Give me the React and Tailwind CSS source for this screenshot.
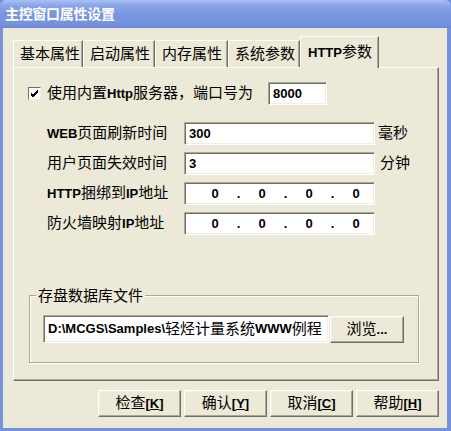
import React from 'react';

const font = "font-['Liberation_Sans','Noto_Sans_CJK_SC',sans-serif]";

const sunken =
  'border border-t-[#aca899] border-l-[#aca899] border-b-white border-r-white shadow-[inset_1px_1px_0_#716f64,inset_-1px_-1px_0_#f1efe2] bg-white';

const raised =
  'border border-t-white border-l-white border-b-[#716f64] border-r-[#716f64] shadow-[inset_-1px_-1px_0_#aca899,inset_1px_1px_0_#f1efe2] bg-[#ece9d8]';

const L = ({ children }) => <b className="font-bold text-[13px]">{children}</b>;

const tabs = [
  { label: '基本属性', w: 'w-[70px]' },
  { label: '启动属性', w: 'w-[72px]' },
  { label: '内存属性', w: 'w-[73px]' },
  { label: '系统参数', w: 'w-[72px]' },
];

const IpField = () => (
  <div className={`${sunken} h-[23px] w-[191px] flex items-center`}>
    <div className="w-[26px]" />
    {[0, 1, 2, 3].map((i) => (
      <React.Fragment key={i}>
        <span className="w-[8px] text-center text-[13px] font-bold">0</span>
        {i < 3 && <span className="w-[39px] text-center text-[13px] font-bold">.</span>}
      </React.Fragment>
    ))}
  </div>
);

const Btn = ({ text, k }) => (
  <button type="button" className={`${raised} w-[83px] h-[27px] flex items-center justify-center text-[15px]`}>
    {text}
    <b className="font-bold text-[13px]">
      [<span className="underline">{k}</span>]
    </b>
  </button>
);

export default function App() {
  return (
    <div className={`${font} w-[451px] h-[431px] flex flex-col bg-[#7391dc] text-black overflow-hidden`}>
      {/* title bar */}
      <div className="h-[28px] shrink-0 flex items-center pl-[5px] rounded-t-[6px] bg-[linear-gradient(to_bottom,#a9c0f2_0%,#8aa5e8_20%,#7b97e0_45%,#7592dd_85%,#6a88d6_100%)]">
        <span className="text-white font-bold text-[14px] tracking-[-0.3px]">主控窗口属性设置</span>
      </div>

      {/* body */}
      <div className="flex-1 ml-[3px] mr-[4px] mb-[3px] bg-[#ece9d8] pl-[10px] pr-[8px] pt-[8px] flex flex-col">
        {/* tab strip */}
        <div className="h-[31px] flex items-end">
          {tabs.map((t) => (
            <div
              key={t.label}
              className={`${t.w} h-[27px] flex items-center pl-[6px] text-[15px] border-l border-t border-l-white border-t-white border-r border-r-[#716f64] shadow-[inset_-1px_0_0_#aca899] bg-[#ece9d8]`}
            >
              {t.label}
            </div>
          ))}
          <div className="w-[79px] h-[32px] -mb-[1px] relative z-10 flex items-center pl-[7px] text-[15px] border-l border-t border-l-white border-t-white border-r border-r-[#716f64] shadow-[inset_-1px_0_0_#aca899] bg-[#ece9d8]">
            <L>HTTP</L>参数
          </div>
        </div>

        {/* panel */}
        <div className="h-[314px] border border-t-white border-l-white border-b-[#716f64] border-r-[#716f64] shadow-[inset_-1px_-1px_0_#aca899] flex flex-col pl-[14px] pt-[14px]">
          <div className="flex items-center h-[23px]">
            <div className="w-[240px] flex items-center">
              <div className="w-[13px] h-[13px] bg-white border border-t-[#716f64] border-l-[#716f64] border-b-[#f1efe2] border-r-[#f1efe2] flex items-center justify-center">
                <svg width="9" height="9" viewBox="0 0 9 9">
                  <path d="M1 4 L3 6 L8 1 M1 5 L3 7 L8 2 M1 6 L3 8 L8 3" stroke="#000" strokeWidth="1" fill="none" />
                </svg>
              </div>
              <span className="ml-[6px] text-[15px] whitespace-nowrap">
                使用内置<L>Http</L>服务器，端口号为
              </span>
            </div>
            <div className={`${sunken} w-[59px] h-[23px] flex items-center pl-[4px] text-[13px] font-bold`}>8000</div>
          </div>

          <div className="mt-[17px] pl-[19px] grid grid-cols-[137px_191px_auto] gap-y-[7px] items-center">
            <span className="text-[15px]">
              <L>WEB</L>页面刷新时间
            </span>
            <div className={`${sunken} h-[23px] flex items-center pl-[4px] text-[13px] font-bold`}>300</div>
            <span className="text-[15px] pl-[3px]">毫秒</span>

            <span className="text-[15px]">用户页面失效时间</span>
            <div className={`${sunken} h-[23px] flex items-center pl-[4px] text-[13px] font-bold`}>3</div>
            <span className="text-[15px] pl-[5px]">分钟</span>

            <span className="text-[15px]">
              <L>HTTP</L>捆绑到<L>IP</L>地址
            </span>
            <IpField />
            <span />

            <span className="text-[15px]">
              防火墙映射<L>IP</L>地址
            </span>
            <IpField />
            <span />
          </div>

          {/* group box */}
          <div className="mt-[60px] ml-[1px] w-[390px] h-[68px] relative border border-[#aca899] shadow-[inset_1px_1px_0_#fff,1px_1px_0_#fff] pl-[13px] pt-[19px] flex">
            <span className="absolute -top-[10px] left-[6px] px-[2px] bg-[#ece9d8] text-[15px] leading-[20px]">存盘数据库文件</span>
            <div className={`${sunken} w-[286px] h-[28px] flex items-center pl-[4px] overflow-hidden whitespace-nowrap text-[15px]`}>
              <L>D:\MCGS\Samples\</L>轻烃计量系统<L>WWW</L>例程
            </div>
            <button type="button" className={`${raised} ml-[1px] mt-[1px] w-[74px] h-[27px] flex items-center justify-center text-[15px]`}>
              浏览<L>...</L>
            </button>
          </div>
        </div>

        {/* buttons */}
        <div className="mt-[9px] flex justify-end gap-[3px]">
          <Btn text="检查" k="K" />
          <Btn text="确认" k="Y" />
          <Btn text="取消" k="C" />
          <Btn text="帮助" k="H" />
        </div>
      </div>
    </div>
  );
}
